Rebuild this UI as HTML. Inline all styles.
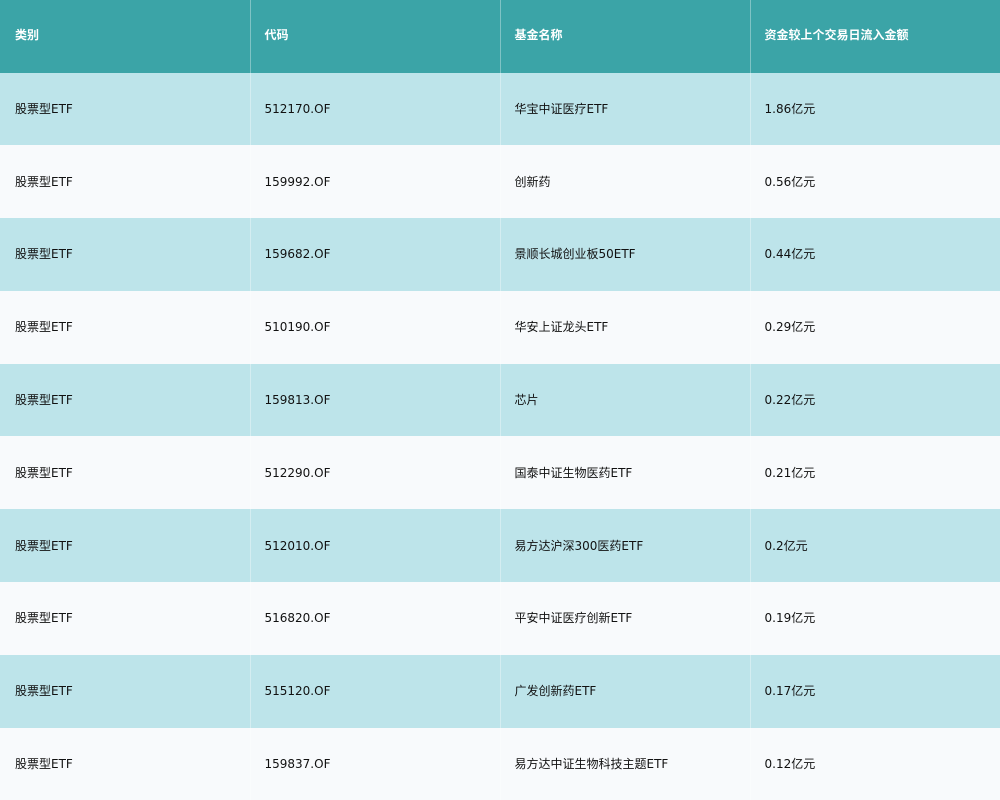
<!DOCTYPE html>
<html><head><meta charset="utf-8"><style>
html,body{margin:0;padding:0;width:1000px;height:800px;overflow:hidden;background:#f8fafc}
table{border-collapse:collapse;width:1000px;table-layout:fixed;font-family:"DejaVu Sans","Noto Sans CJK SC",sans-serif;font-size:12px;color:#111}
td,th{padding:0 0 0 14px;text-align:left;border-left:1px solid rgba(255,255,255,0.35);height:72.8px;box-sizing:border-box;vertical-align:middle;line-height:14px}
td:first-child,th:first-child{border-left:none;padding-left:15px}
th{background:#3ba4a7;color:#fff;font-weight:bold;height:72.5px;padding-bottom:3px}
tr:nth-child(even) td{background:#bde4ea}
tr:nth-child(odd) td{background:#f8fafc}
</style></head><body>
<table>
<tr><th>类别</th><th>代码</th><th>基金名称</th><th>资金较上个交易日流入金额</th></tr>
<tr><td>股票型ETF</td><td>512170.OF</td><td>华宝中证医疗ETF</td><td>1.86亿元</td></tr>
<tr><td>股票型ETF</td><td>159992.OF</td><td>创新药</td><td>0.56亿元</td></tr>
<tr><td>股票型ETF</td><td>159682.OF</td><td>景顺长城创业板50ETF</td><td>0.44亿元</td></tr>
<tr><td>股票型ETF</td><td>510190.OF</td><td>华安上证龙头ETF</td><td>0.29亿元</td></tr>
<tr><td>股票型ETF</td><td>159813.OF</td><td>芯片</td><td>0.22亿元</td></tr>
<tr><td>股票型ETF</td><td>512290.OF</td><td>国泰中证生物医药ETF</td><td>0.21亿元</td></tr>
<tr><td>股票型ETF</td><td>512010.OF</td><td>易方达沪深300医药ETF</td><td>0.2亿元</td></tr>
<tr><td>股票型ETF</td><td>516820.OF</td><td>平安中证医疗创新ETF</td><td>0.19亿元</td></tr>
<tr><td>股票型ETF</td><td>515120.OF</td><td>广发创新药ETF</td><td>0.17亿元</td></tr>
<tr><td>股票型ETF</td><td>159837.OF</td><td>易方达中证生物科技主题ETF</td><td>0.12亿元</td></tr>
</table>
</body></html>
